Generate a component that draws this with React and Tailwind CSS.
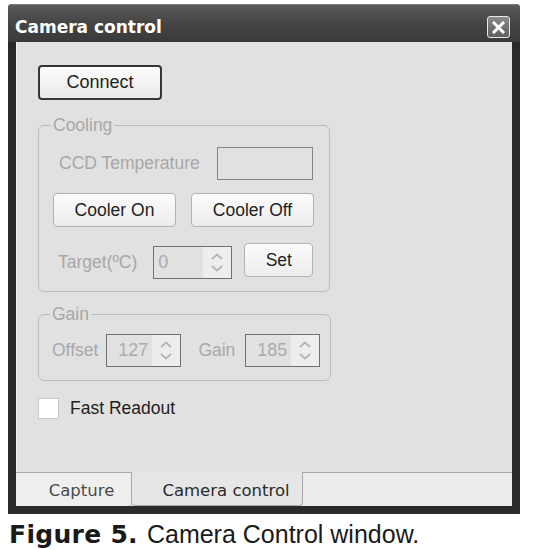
import React from 'react';

const ui = { fontFamily: '"Liberation Sans", Arial, sans-serif' };
const tabFont = { fontFamily: '"DejaVu Sans", Tahoma, sans-serif' };

const Arrows = () => (
  <div className="flex h-full w-[28px] flex-col items-center justify-center gap-[5px] bg-[#ededed]">
    <svg width="12" height="7" viewBox="0 0 12 7">
      <path d="M1 6 L6 1.5 L11 6" fill="none" stroke="#b4b4b4" strokeWidth="1.8" />
    </svg>
    <svg width="12" height="7" viewBox="0 0 12 7">
      <path d="M1 1 L6 5.5 L11 1" fill="none" stroke="#b4b4b4" strokeWidth="1.8" />
    </svg>
  </div>
);

const Spinner = ({ value, width, alignRight }) => (
  <div
    className={`flex h-[33px] items-center border-[1.5px] border-[#707070] ${width}`}
  >
    <div
      className={`flex h-full flex-1 items-center text-[18px] text-[#ababab] ${alignRight ? 'justify-end pr-[4px]' : 'pl-[4px]'}`}
    >
      {value}
    </div>
    <Arrows />
  </div>
);

const Button = ({ children, className }) => (
  <button
    className={`flex items-center justify-center rounded-[4px] border-[1.5px] border-[#b2b2b2] bg-gradient-to-b from-[#fbfbfb] to-[#ececec] text-[17.5px] text-[#1e1e1e] ${className}`}
  >
    {children}
  </button>
);

export default function App() {
  return (
    <div className="flex h-[550px] w-[533px] flex-col bg-white pl-[8px] pt-[4px]" style={ui}>
      {/* window */}
      <div className="flex h-[511px] w-[512px] flex-col rounded-t-[4px] bg-[#2a2a2a]">
        {/* title bar */}
        <div className="flex h-[38px] items-center justify-between rounded-t-[4px] border-t border-[#7a7a7a] bg-gradient-to-b from-[#5a5a5a] via-[#444444] to-[#3a3a3a] pl-[7px] pr-[10px] pt-[7px]">
          <span
            className="text-[17px] font-bold leading-none text-white"
            style={{ fontFamily: '"DejaVu Sans", Verdana, sans-serif' }}
          >
            Camera control
          </span>
          <div className="flex h-[22px] w-[23px] items-center justify-center rounded-[3px] border-[1.5px] border-[#e8e8e8] bg-gradient-to-b from-[#8a8a8a] to-[#5e5e5e]">
            <svg width="13" height="13" viewBox="0 0 13 13">
              <path d="M2 2 L11 11 M11 2 L2 11" stroke="#ffffff" strokeWidth="3" strokeLinecap="square" />
            </svg>
          </div>
        </div>

        {/* client area */}
        <div className="mx-[8px] mb-[8px] flex flex-1 flex-col bg-[#e1e1e1]">
          <div className="flex flex-1 flex-col border-l border-[#f2f2f2] pl-[21px] pt-[23px]">
            <button className="flex h-[35px] w-[124px] items-center justify-center rounded-[4px] border-2 border-[#363636] bg-gradient-to-b from-[#fdfdfd] to-[#e9e9e9] text-[18px] text-[#1e1e1e]">
              Connect
            </button>

            {/* Cooling */}
            <fieldset className="mt-[15px] w-[292px] rounded-[6px] border-[1.5px] border-[#bcbcbc] pb-[12px] pl-[14px]">
              <legend className="-ml-[2px] px-[2px] text-[17.5px] leading-[20px] text-[#a8a8a8]">Cooling</legend>
              <div className="mt-[12px] flex h-[33px] items-center">
                <span className="ml-[6px] text-[17.5px] text-[#a8a8a8]">CCD Temperature</span>
                <div className="ml-[17px] h-[33px] w-[96px] border-[1.5px] border-[#858585]" />
              </div>
              <div className="mt-[13px] flex gap-[15px]">
                <Button className="h-[34px] w-[123px]">Cooler On</Button>
                <Button className="h-[34px] w-[123px]">Cooler Off</Button>
              </div>
              <div className="mt-[16px] flex items-start">
                <span className="ml-[5px] mt-[6px] text-[17.5px] text-[#a8a8a8]">Target(ºC)</span>
                <div className="ml-[16px] mt-[3px]">
                  <Spinner value="0" width="w-[79px]" />
                </div>
                <Button className="ml-[12px] h-[34px] w-[69px]">Set</Button>
              </div>
            </fieldset>

            {/* Gain */}
            <fieldset className="mt-[12px] w-[293px] rounded-[6px] border-[1.5px] border-[#bcbcbc] pb-[13px] pl-[13px]">
              <legend className="-ml-[2px] px-[2px] text-[17.5px] leading-[20px] text-[#a8a8a8]">Gain</legend>
              <div className="mt-[10px] flex items-center">
                <span className="text-[17.5px] text-[#a8a8a8]">Offset</span>
                <div className="ml-[8px]">
                  <Spinner value="127" width="w-[75px]" alignRight />
                </div>
                <span className="ml-[17px] text-[17.5px] text-[#a8a8a8]">Gain</span>
                <div className="ml-[10px]">
                  <Spinner value="185" width="w-[75px]" alignRight />
                </div>
              </div>
            </fieldset>

            {/* Fast readout */}
            <div className="mt-[14px] flex items-center">
              <div className="h-[21px] w-[21px] border border-[#c8c8c8] bg-white" />
              <span className="ml-[11px] text-[17.5px] text-[#1e1e1e]">Fast Readout</span>
            </div>
          </div>

          {/* tabs */}
          <div className="flex h-[34px] items-stretch text-[16.5px]" style={tabFont}>
            <div className="flex w-[116px] items-center justify-center rounded-br-[4px] border-r-[1.5px] border-t-[1.5px] border-[#a9a9a9] bg-[#efefef] pl-[16px] pt-[4px] text-[#4a4a4a]">
              Capture
            </div>
            <div className="flex w-[171px] items-center justify-center rounded-b-[4px] border-r-[1.5px] border-b border-[#a9a9a9] bg-[#e6e6e6] pl-[18px] pt-[5px] text-[#2a2a2a]">
              Camera control
            </div>
            <div className="flex-1 border-t-[1.5px] border-[#a9a9a9] bg-[#ececec]" />
          </div>
        </div>
      </div>

      {/* caption */}
      <div className="mt-[5px] flex items-baseline pl-[1px] text-[25px] leading-[30px] text-[#1a1a1a]">
        <span className="font-bold" style={{ fontFamily: '"DejaVu Sans", sans-serif', letterSpacing: '0.3px' }}>
          Figure 5.
        </span>
        <span className="ml-[9px]">Camera Control window.</span>
      </div>
    </div>
  );
}
